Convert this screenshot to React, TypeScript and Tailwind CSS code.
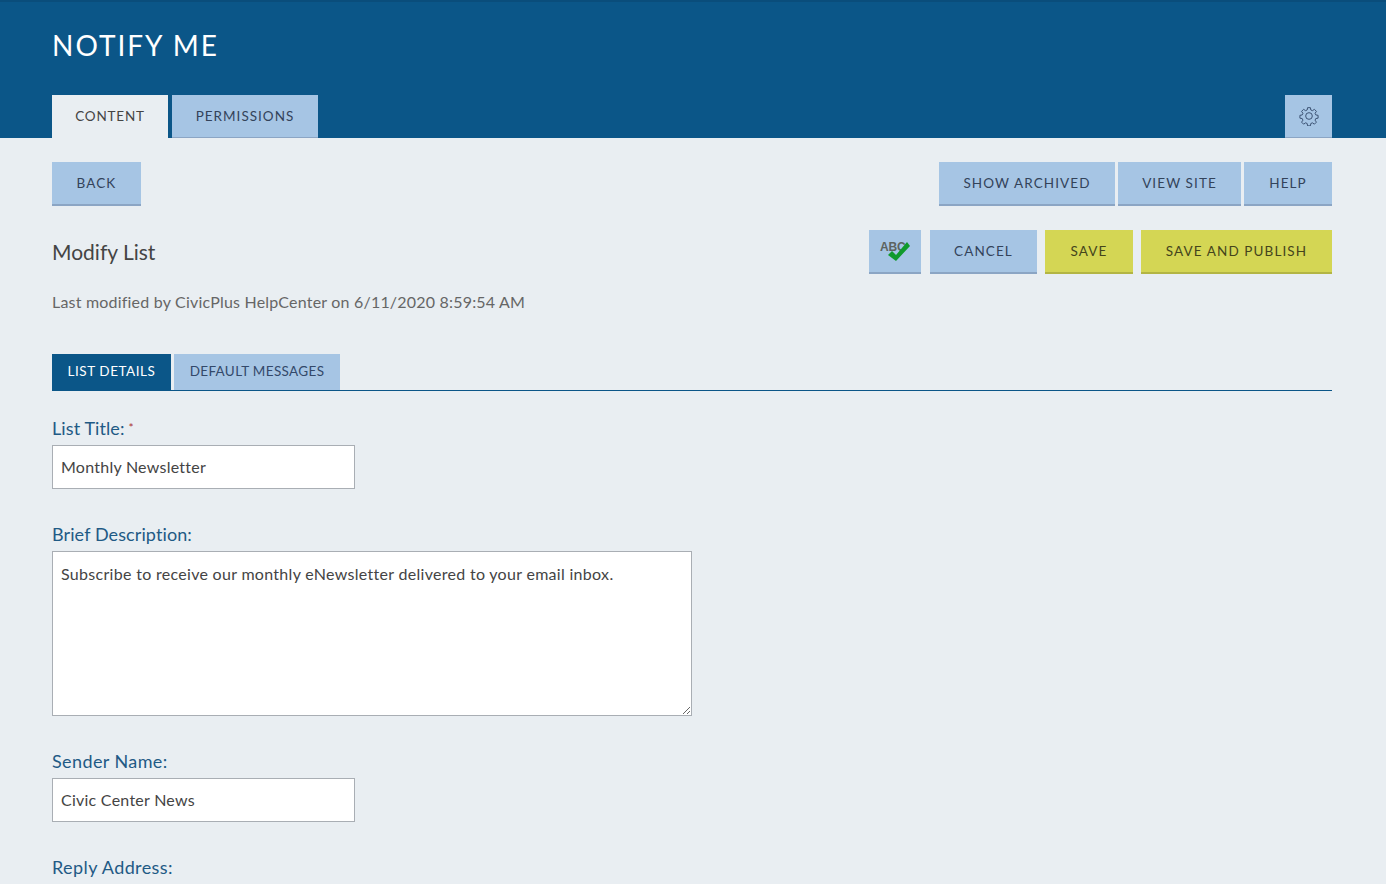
import React from "react";

const font = "font-['Lato','Noto_Sans',sans-serif]";
const btn = "flex h-[44px] items-center justify-center border-b-2 text-[13.5px] tracking-[1.1px] text-[#33435a]";
const blue = "bg-[#a6c5e4] border-[#8ba5c4]";
const yellow = "bg-[#d4d654] border-[#b3b544] text-[#44451c]";
const label = "block text-[18px] leading-[24px] text-[#1f5a85]";
const base = "block border border-[#a9aeb4] bg-white px-[8px] text-[16px] text-[#444] outline-none " + font;
const input = "h-[44px] w-[303px] pb-[2px] tracking-[0.25px] " + base;

function Gear() {
  return (
    <svg width="20" height="20" viewBox="0 0 24 24" fill="none" stroke="#33496a" strokeWidth="1.1" strokeLinejoin="round">
      <path d="M10.3 2h3.4l.5 2.8 1.9.8 2.4-1.6 2.4 2.4-1.6 2.4.8 1.9 2.8.5v3.4l-2.8.5-.8 1.9 1.6 2.4-2.4 2.4-2.4-1.6-1.9.8-.5 2.8h-3.4l-.5-2.8-1.9-.8-2.4 1.6-2.4-2.4 1.6-2.4-.8-1.9-2.8-.5v-3.4l2.8-.5.8-1.9-1.6-2.4 2.4-2.4 2.4 1.6 1.9-.8z" />
      <circle cx="12" cy="12" r="4" />
    </svg>
  );
}

function Spell() {
  return (
    <span className="relative block h-[24px] w-[32px]">
      <span className="absolute left-[1px] top-[1px] font-['Liberation_Sans',sans-serif] text-[12px] font-bold leading-[14px] tracking-[-0.2px] text-[#5c6360]">ABC</span>
      <svg className="absolute left-[9px] top-[3px]" width="22" height="19" viewBox="0 0 22 19">
        <path d="M0 13l4-4 4 4L19 0l3 4L8 19z" fill="#109a2c" />
      </svg>
    </span>
  );
}

export default function App() {
  return (
    <div className={`h-[884px] overflow-hidden bg-[#e9eef2] ${font}`}>
      <header className="h-[138px] border-t-2 border-[#0a4d7b] bg-[#0b5688] pl-[52px] pr-[54px]">
        <h1 className="pt-[26px] text-[28px] leading-[34px] tracking-[2px] text-white">NOTIFY ME</h1>
        <div className="mt-[33px] flex items-start">
          <div className="flex h-[43px] w-[116px] items-center justify-center bg-[#e9eef2] text-[13.5px] tracking-[0.8px] text-[#444]">CONTENT</div>
          <div className="ml-[4px] flex h-[43px] w-[146px] items-center justify-center border-b border-[#8ba5c4] bg-[#a6c5e4] text-[13.5px] tracking-[1px] text-[#33435a]">PERMISSIONS</div>
          <div className="ml-auto flex h-[43px] w-[47px] items-center justify-center border-b border-[#8ba5c4] bg-[#a6c5e4]"><Gear /></div>
        </div>
      </header>

      <main className="pl-[52px] pr-[54px]">
        <div className="flex justify-between pt-[24px]">
          <div className={`${btn} ${blue} w-[89px]`}>BACK</div>
          <div className="flex gap-[3px]">
            <div className={`${btn} ${blue} w-[176px]`}>SHOW ARCHIVED</div>
            <div className={`${btn} ${blue} w-[123px]`}>VIEW SITE</div>
            <div className={`${btn} ${blue} w-[88px]`}>HELP</div>
          </div>
        </div>

        <div className="mt-[24px] flex items-start justify-between">
          <div>
            <h2 className="pt-[8px] text-[21px] leading-[28px] text-[#444]">Modify List</h2>
            <p className="mt-[25px] text-[16px] leading-[22px] tracking-[0.2px] text-[#666]">Last modified by CivicPlus HelpCenter on 6/11/2020 8:59:54 AM</p>
          </div>
          <div className="flex">
            <div className={`${btn} ${blue} w-[52px]`}><Spell /></div>
            <div className={`${btn} ${blue} ml-[9px] w-[107px]`}>CANCEL</div>
            <div className={`${btn} ${yellow} ml-[8px] w-[88px]`}>SAVE</div>
            <div className={`${btn} ${yellow} ml-[8px] w-[191px]`}>SAVE AND PUBLISH</div>
          </div>
        </div>

        <div className="mt-[41px] flex h-[37px] gap-[3px] border-b border-[#0b5688]">
          <div className="flex h-[36px] w-[119px] items-center justify-center bg-[#0b5688] pb-[1px] text-[13.5px] tracking-[0.55px] text-white">LIST DETAILS</div>
          <div className="flex h-[36px] w-[166px] items-center justify-center bg-[#a6c5e4] pb-[1px] text-[13.5px] tracking-[0.35px] text-[#33496a]">DEFAULT MESSAGES</div>
        </div>

        <label className={`${label} mt-[25px] tracking-[0.1px]`}>List Title:<span className="ml-[4px] align-[3px] text-[12px] text-[#a33]">*</span></label>
        <input className={`${input} mt-[5px]`} defaultValue="Monthly Newsletter" />

        <label className={`${label} mt-[33px] tracking-[0.1px]`}>Brief Description:</label>
        <textarea className={`${base} mt-[5px] h-[165px] w-[640px] resize py-[11px] leading-[22px] tracking-[0.3px]`} defaultValue="Subscribe to receive our monthly eNewsletter delivered to your email inbox." />

        <label className={`${label} mt-[33px] tracking-[0.4px]`}>Sender Name:</label>
        <input className={`${input} mt-[5px]`} defaultValue="Civic Center News" />

        <label className={`${label} mt-[33px] tracking-[0.4px]`}>Reply Address:</label>
      </main>
    </div>
  );
}
